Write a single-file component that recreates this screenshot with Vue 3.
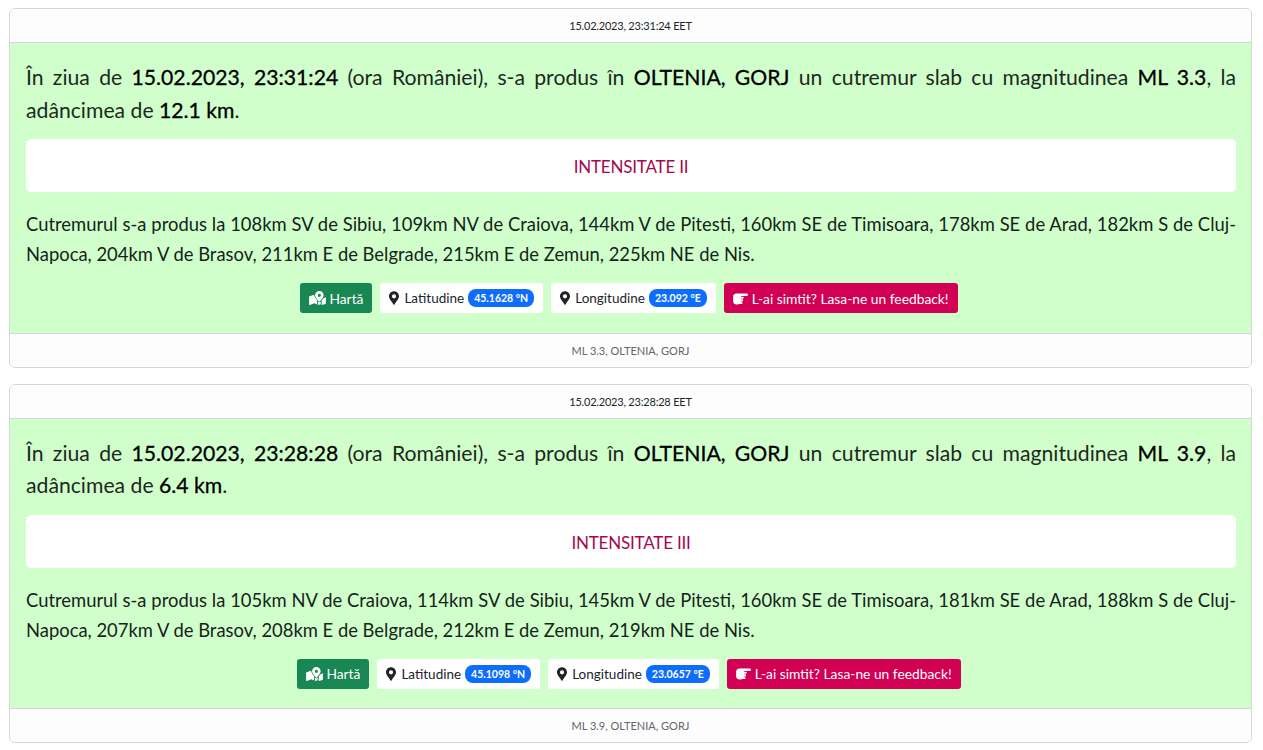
<script setup>
const quakes = [
  {
    time: '15.02.2023, 23:31:24',
    place: 'OLTENIA, GORJ',
    mag: 'ML 3.3',
    depth: '12.1 km',
    intensity: 'INTENSITATE II',
    dist: 'Cutremurul s-a produs la 108km SV de Sibiu, 109km NV de Craiova, 144km V de Pitesti, 160km SE de Timisoara, 178km SE de Arad, 182km S de Cluj-Napoca, 204km V de Brasov, 211km E de Belgrade, 215km E de Zemun, 225km NE de Nis.',
    lat: '45.1628 °N',
    lon: '23.092 °E'
  },
  {
    time: '15.02.2023, 23:28:28',
    place: 'OLTENIA, GORJ',
    mag: 'ML 3.9',
    depth: '6.4 km',
    intensity: 'INTENSITATE III',
    dist: 'Cutremurul s-a produs la 105km NV de Craiova, 114km SV de Sibiu, 145km V de Pitesti, 160km SE de Timisoara, 181km SE de Arad, 188km S de Cluj-Napoca, 207km V de Brasov, 208km E de Belgrade, 212km E de Zemun, 219km NE de Nis.',
    lat: '45.1098 °N',
    lon: '23.0657 °E'
  }
]
</script>

<template>
  <div class="page">
    <div v-for="q in quakes" :key="q.time" class="card">
      <div class="card-head">{{ q.time }} EET</div>
      <div class="card-body">
        <p class="lead">
          În ziua de <b>{{ q.time }}</b> (ora României), s-a produs în <b>{{ q.place }}</b> un cutremur slab cu magnitudinea <b>{{ q.mag }}</b>, la adâncimea de <b>{{ q.depth }}</b>.
        </p>
        <div class="intensity">{{ q.intensity }}</div>
        <p class="dist">{{ q.dist }}</p>
        <div class="actions">
          <a class="btn green">
            <svg class="ico map" viewBox="0 0 18 15" fill="currentColor"><path fill-rule="evenodd" d="M11 0a4.600 4.600 0 0 0-4.600 4.600c0 2 2.700 5.200 3.800 6.400.4.500 1.200.500 1.600 0 1.100-1.200 3.800-4.400 3.800-6.400A4.600 4.600 0 0 0 11 0zm0 6.300a1.700 1.700 0 1 1 0-3.400 1.700 1.700 0 0 1 0 3.400z"/><path d="M0 5.800l5.300-1.700c.2 1.900 1.700 4 3.300 5.900v4.500l-3-1.300L.7 15c-.4.100-.7-.2-.7-.5zM9.600 11.400c.8.700 2 .700 2.800 0l.1 2.800-2.900.800zM13.500 10.200l1.900-2.500L18 6.800v6.400c0 .3-.2.500-.4.600l-4.100 1.200z"/></svg>
            Hartă
          </a>
          <span class="coord">
            <svg class="ico pin" viewBox="0 0 384 512" fill="currentColor"><path d="M192 0C86 0 0 86 0 192c0 77 27 99 172 310 9 13 31 13 40 0 145-211 172-233 172-310C384 86 298 0 192 0zm0 272a80 80 0 1 1 0-160 80 80 0 0 1 0 160z"/></svg>
            Latitudine <span class="badge">{{ q.lat }}</span>
          </span>
          <span class="coord">
            <svg class="ico pin" viewBox="0 0 384 512" fill="currentColor"><path d="M192 0C86 0 0 86 0 192c0 77 27 99 172 310 9 13 31 13 40 0 145-211 172-233 172-310C384 86 298 0 192 0zm0 272a80 80 0 1 1 0-160 80 80 0 0 1 0 160z"/></svg>
            Longitudine <span class="badge">{{ q.lon }}</span>
          </span>
          <a class="btn pink">
            <svg class="ico hand" viewBox="0 0 16 14" fill="currentColor">
              <rect x="0" y="1.500" width="8.500" height="12" rx="4" />
              <rect x="5" y="1.500" width="11" height="2.800" rx="1.300" />
              <rect x="6.500" y="5" width="5" height="2.200" rx="1" />
              <rect x="6.500" y="7.900" width="4.300" height="2.200" rx="1" />
              <rect x="6.500" y="10.800" width="3.600" height="2.200" rx="1" />
            </svg>
            L-ai simtit? Lasa-ne un feedback!
          </a>
        </div>
      </div>
      <div class="card-foot">{{ q.mag }}, {{ q.place }}</div>
    </div>
  </div>
</template>

<style>
body {
  background: #fff;
}
</style>

<style scoped>
.page {
  padding: 8px 11px 0 9px;
  font-family: Lato, "Open Sans", sans-serif;
  color: #212529;
}

.card {
  border: 1px solid #d6d6d6;
  border-radius: 6px;
  margin-bottom: 16px;
  overflow: hidden;
  background: #fff;
}

.card-head,
.card-foot {
  height: 33px;
  display: flex;
  align-items: center;
  justify-content: center;
  font-size: 11px;
  background: #fdfdfd;
}

.card-head {
  color: #212529;
  letter-spacing: -0.2px;
  border-bottom: 1px solid #d6d6d6;
}

.card-foot {
  color: #5f666d;
  border-top: 1px solid #d6d6d6;
}

.card-body {
  background: #d1ffcc;
  padding: 18px 15px 20px 16px;
  height: 289.500px;
  box-sizing: border-box;
}

.lead {
  margin: 0;
  font-size: 21.200px;
  line-height: 32.500px;
  text-align: justify;
  color: #1b2a1c;
}

.lead b {
  font-weight: 400;
  -webkit-text-stroke: 0.3px #000;
  color: #000;
}

.intensity {
  margin-top: 13px;
  height: 53px;
  box-sizing: border-box;
  padding-top: 2px;
  background: #fff;
  border-radius: 5px;
  display: flex;
  align-items: center;
  justify-content: center;
  font-size: 17px;
  letter-spacing: -0.2px;
  color: #a6074f;
}

.dist {
  margin: 17px 0 0;
  font-size: 18.400px;
  line-height: 30px;
  text-align: justify;
  color: #14241a;
}

.actions {
  margin-top: 14px;
  padding-right: 4px;
  display: flex;
  justify-content: center;
  gap: 8px;
}

.btn,
.coord {
  height: 30px;
  box-sizing: border-box;
  display: inline-flex;
  align-items: center;
  padding: 0 9px;
  border-radius: 3px;
  white-space: nowrap;
}

.btn {
  font-size: 13.800px;
  color: #fff;
}

.green {
  background: #198754;
}

.pink {
  background: #d10054;
}

.coord {
  font-size: 13.500px;
  background: #fff;
  color: #212529;
}

.ico {
  flex: none;
  margin-right: 4px;
}

.map {
  width: 17px;
  height: 14px;
  margin-right: 3px;
}

.pin {
  width: 10px;
  height: 14px;
  margin-right: 5px;
}

.hand {
  width: 15px;
  height: 13px;
}

.badge {
  margin-left: 4px;
  padding: 0 6px;
  height: 18px;
  line-height: 18px;
  border-radius: 8px;
  background: #0d6efd;
  color: #fff;
  font-size: 10.500px;
  font-weight: 700;
}
</style>
